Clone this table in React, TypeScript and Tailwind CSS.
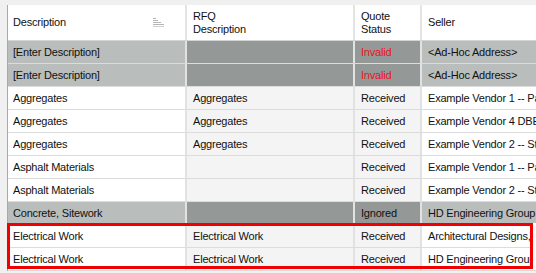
import React from "react";

type Row = {
  desc: string;
  rfq: string;
  status: string;
  seller: string;
  muted?: boolean;
};

const rows: Row[] = [
  { desc: "[Enter Description]", rfq: "", status: "Invalid", seller: "<Ad-Hoc Address>", muted: true },
  { desc: "[Enter Description]", rfq: "", status: "Invalid", seller: "<Ad-Hoc Address>", muted: true },
  { desc: "Aggregates", rfq: "Aggregates", status: "Received", seller: "Example Vendor 1 -- Paving Supply" },
  { desc: "Aggregates", rfq: "Aggregates", status: "Received", seller: "Example Vendor 4 DBE" },
  { desc: "Aggregates", rfq: "Aggregates", status: "Received", seller: "Example Vendor 2 -- Stone" },
  { desc: "Asphalt Materials", rfq: "", status: "Received", seller: "Example Vendor 1 -- Paving Supply" },
  { desc: "Asphalt Materials", rfq: "", status: "Received", seller: "Example Vendor 2 -- Stone" },
  { desc: "Concrete, Sitework", rfq: "", status: "Ignored", seller: "HD Engineering Group", muted: true },
  { desc: "Electrical Work", rfq: "Electrical Work", status: "Received", seller: "Architectural Designs, Inc." },
  { desc: "Electrical Work", rfq: "Electrical Work", status: "Received", seller: "HD Engineering Group" },
];

const cols = "grid grid-cols-[179px_168px_67px_240px]";

function SortIcon() {
  return (
    <svg width="12" height="9" viewBox="0 0 12 9" className="shrink-0">
      <rect x="0" y="0" width="3" height="1" fill="#b5b5b5" />
      <rect x="0" y="2" width="5" height="1" fill="#b5b5b5" />
      <rect x="0" y="4" width="8" height="1" fill="#b5b5b5" />
      <rect x="0" y="6" width="11" height="1" fill="#b5b5b5" />
      <rect x="0" y="8" width="11" height="1" fill="#d0d0d0" />
    </svg>
  );
}

export default function App() {
  return (
    <div
      className="relative w-[536px] h-[273px] overflow-hidden bg-[#f0f0f0] pt-[5px] pl-[7px] text-[11px] leading-[13px] tracking-[-0.2px] text-[#111]"
      style={{ fontFamily: "'Liberation Sans', Arial, sans-serif" }}
    >
      <div className="w-[660px] border-l border-[#a8a8a8] bg-white">
        {/* header */}
        <div className={`${cols} h-[36px] border-b border-[#d4d4d4]`}>
          <div className="flex items-center justify-between border-r-2 border-[#e4e4e4] pl-[5px] pr-[20px]">
            <span>Description</span>
            <SortIcon />
          </div>
          <div className="flex flex-col justify-center border-r-2 border-[#e4e4e4] pl-[6px]">
            <span>RFQ</span>
            <span>Description</span>
          </div>
          <div className="flex flex-col justify-center border-r-2 border-[#e4e4e4] pl-[6px]">
            <span>Quote</span>
            <span>Status</span>
          </div>
          <div className="flex items-center pl-[6px]">
            <span>Seller</span>
          </div>
        </div>

        {/* body */}
        {rows.map((r, i) => {
          const light = r.muted ? "bg-[#b9bebd]" : "bg-white";
          const dark = r.muted ? "bg-[#949997]" : "bg-[#f4f4f4]";
          return (
            <div key={i} className={`${cols} h-[23px] border-b border-[#dcdcdc]`}>
              <div className={`${light} flex items-center border-r-2 border-[#e2e2e2] pl-[5px] whitespace-nowrap`}>
                {r.desc}
              </div>
              <div className={`${dark} flex items-center border-r-2 border-[#e2e2e2] pl-[6px] whitespace-nowrap`}>
                {r.rfq}
              </div>
              <div
                className={`${dark} flex items-center border-r-2 border-[#e2e2e2] pl-[6px] whitespace-nowrap ${
                  r.status === "Invalid" ? "text-[#e8141c]" : ""
                }`}
              >
                {r.status}
              </div>
              <div className={`${light} flex items-center pl-[6px] whitespace-nowrap overflow-hidden`}>
                {r.seller}
              </div>
            </div>
          );
        })}
      </div>

      {/* highlight around the Electrical Work rows, with a clear margin past its right edge */}
      <div className="absolute left-[7px] top-[223px] w-[529px] h-[46px] flex">
        <div className="flex-1 border-[3px] border-[#f00000]" />
        <div className="w-[3px] bg-white" />
      </div>
    </div>
  );
}
